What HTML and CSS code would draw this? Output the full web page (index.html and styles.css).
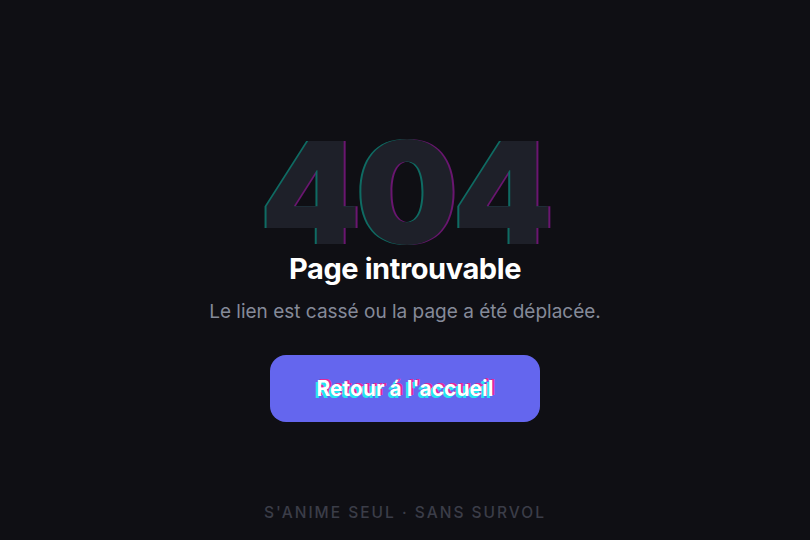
FILE: index.html
```html
<!DOCTYPE html>
<html lang="fr">
<head>
    <meta charset="UTF-8">
    <meta name="viewport" content="width=device-width, initial-scale=1.0">
    <title>Page introuvable</title>
    <link rel="stylesheet" href="styles.css">
</head>
<body>
    <main class="page">
        <div class="error">
            <h1 class="code">404</h1>
            <h2 class="title">Page introuvable</h2>
            <p class="text">Le lien est cassé ou la page a été déplacée.</p>
            <a href="#" class="home">Retour á l'accueil</a>
        </div>
        <p class="note">S'anime seul · sans survol</p>
    </main>
</body>
</html>
```

FILE: styles.css
```css
html, body {
    margin: 0;
    height: 100%;
}
body {
    font-family: Inter, "Noto Sans", sans-serif;
    background-color: #0f0f14;
    color: #fff;
}
.page {
    height: 100%;
    display: flex;
    flex-direction: column;
    align-items: center;
}
.error {
    display: flex;
    flex-direction: column;
    align-items: center;
    padding-top: 137px;
}
.code {
    margin: 0;
    font-size: 142px;
    font-weight: 900;
    line-height: 110px;
    letter-spacing: -4px;
    color: #1e2029;
    text-shadow: -2px 0 0 #0f6b63, 2px 0 0 #6a1670;
}
.title {
    margin: 4px 0 0;
    font-size: 29px;
    font-weight: 700;
    letter-spacing: -0.4px;
}
.text {
    margin: 14px 0 0;
    font-size: 19px;
    color: #858a99;
}
.home {
    margin-top: 32px;
    width: 270px;
    height: 67px;
    display: flex;
    align-items: center;
    justify-content: center;
    border-radius: 16px;
    background-color: #6466ee;
    color: #fff;
    font-size: 21px;
    font-weight: 700;
    text-decoration: none;
    text-shadow: -2px 2px 0 #22e5f0, 2px -1px 0 #e0289a;
}
.note {
    margin: auto 0 18px;
    font-size: 15.5px;
    font-weight: 500;
    letter-spacing: 2px;
    text-transform: uppercase;
    color: #3b3d48;
}
```
